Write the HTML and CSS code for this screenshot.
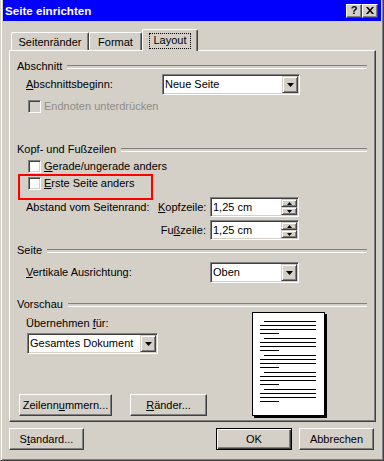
FILE: index.html
```html
<!DOCTYPE html>
<html lang="de">
<head>
  <meta charset="UTF-8" />
  <title>Seite einrichten</title>
  <link rel="stylesheet" href="styles.css">
</head>
<body>

  <div class="window">

    <!-- TITLE BAR -->
    <div class="titlebar">
      <span class="title">Seite einrichten</span>
      <span class="title-btn help">?</span>
      <span class="title-btn close">
        <svg width="8" height="7" viewBox="0 0 8 7"><path d="M0 0h2l2 2.5L6 0h2L5 3.5 8 7H6L4 4.5 2 7H0l3-3.5z"/></svg>
      </span>
    </div>

    <!-- TABS -->
    <div class="tabs">
      <div class="tab tab-margins">Seitenränder</div>
      <div class="tab tab-format">Format</div>
      <div class="tab tab-layout active"><span class="focus">Layout</span></div>
    </div>

    <div class="panel">

      <div class="group-title first">Abschnitt</div>
      <div class="row row-section">
        <span class="label-section"><u>A</u>bschnittsbeginn:</span>
        <div class="combo combo-section">
          <span class="combo-text">Neue Seite</span>
          <span class="combo-btn"><svg width="7" height="4" viewBox="0 0 7 4"><path d="M0 0h7L3.5 4z"/></svg></span>
        </div>
      </div>
      <div class="check-row disabled endnotes">
        <span class="check"></span>
        <span>Endnoten unterdrücken</span>
      </div>

      <div class="group-title header-group">Kopf- und Fußzeilen</div>
      <div class="check-row even-odd">
        <span class="check"></span>
        <span><u>G</u>erade/ungerade anders</span>
      </div>
      <div class="check-row first-page highlighted">
        <span class="check"></span>
        <span><u>E</u>rste Seite anders</span>
      </div>

      <div class="distance">
        <span>Abstand vom Seitenrand:</span>
        <span class="sub-label"><u>K</u>opfzeile:</span>
        <div class="spin">
          <span class="spin-text">1,25 cm</span>
          <span class="spin-btns">
            <span class="spin-btn"><svg width="5" height="3" viewBox="0 0 5 3"><path d="M2.5 0L5 3H0z"/></svg></span>
            <span class="spin-btn"><svg width="5" height="3" viewBox="0 0 5 3"><path d="M0 0h5L2.5 3z"/></svg></span>
          </span>
        </div>
        <span></span>
        <span class="sub-label">Fu<u>ß</u>zeile:</span>
        <div class="spin">
          <span class="spin-text">1,25 cm</span>
          <span class="spin-btns">
            <span class="spin-btn"><svg width="5" height="3" viewBox="0 0 5 3"><path d="M2.5 0L5 3H0z"/></svg></span>
            <span class="spin-btn"><svg width="5" height="3" viewBox="0 0 5 3"><path d="M0 0h5L2.5 3z"/></svg></span>
          </span>
        </div>
      </div>

      <div class="group-title page-group">Seite</div>
      <div class="row row-align">
        <span class="label-align"><u>V</u>ertikale Ausrichtung:</span>
        <div class="combo combo-align">
          <span class="combo-text">Oben</span>
          <span class="combo-btn"><svg width="7" height="4" viewBox="0 0 7 4"><path d="M0 0h7L3.5 4z"/></svg></span>
        </div>
      </div>

      <div class="group-title preview-group">Vorschau</div>
      <div class="preview-body">
        <div class="preview-left">
          <div class="apply-label">Übernehmen <u>f</u>ür:</div>
          <div class="combo combo-apply">
            <span class="combo-text">Gesamtes Dokument</span>
            <span class="combo-btn"><svg width="7" height="4" viewBox="0 0 7 4"><path d="M0 0h7L3.5 4z"/></svg></span>
          </div>
          <div class="panel-buttons">
            <div class="btn btn-lines">Zeilenn<u>u</u>mmern...</div>
            <div class="btn btn-borders"><u>R</u>änder...</div>
          </div>
        </div>
        <div class="page">
          <div class="para"><div class="line indent"></div><div class="line"></div><div class="line"></div><div class="line short"></div></div>
          <div class="para"><div class="line indent"></div><div class="line"></div><div class="line"></div><div class="line short"></div></div>
          <div class="para"><div class="line indent"></div><div class="line"></div><div class="line"></div><div class="line short"></div></div>
          <div class="para"><div class="line indent"></div><div class="line"></div><div class="line"></div><div class="line short"></div></div>
          <div class="para"><div class="line indent"></div><div class="line"></div><div class="line"></div><div class="line short"></div></div>
        </div>
      </div>

    </div>

    <!-- DIALOG BUTTONS -->
    <div class="dialog-buttons">
      <div class="btn btn-standard">S<u>t</u>andard...</div>
      <div class="btn btn-ok default">OK</div>
      <div class="btn btn-cancel">Abbrechen</div>
    </div>

  </div>

</body>
</html>
```

FILE: styles.css
```css
* {
  box-sizing: border-box;
  margin: 0;
  padding: 0;
}

body {
  background: #d4d0c8;
  font-family: "Liberation Sans", Arial, sans-serif;
  font-size: 11px;
  line-height: 13px;
  color: #000;
}

u {
  text-decoration: underline;
  text-underline-offset: 1px;
}

.window {
  width: 384px;
  height: 461px;
  padding: 0 2px;
  border: 1px solid;
  border-top: 0;
  border-color: #d4d0c8 #404040 #404040 #d4d0c8;
  box-shadow: inset 1px 0 #fff, inset -1px -1px #808080;
}

/* Title bar */
.titlebar {
  display: flex;
  align-items: center;
  height: 21px;
  padding: 0 3px 0 2px;
  background: #0000fc;
}

.title {
  flex: 1;
  color: #fff;
  font-weight: bold;
  font-size: 11.6px;
}

.title-btn {
  display: flex;
  justify-content: center;
  align-items: center;
  width: 16px;
  height: 14px;
  background: #d4d0c8;
  border: 1px solid;
  border-color: #fff #404040 #404040 #fff;
  box-shadow: inset -1px -1px #808080;
  font-weight: bold;
  font-size: 11px;
}

/* Tabs */
.tabs {
  display: flex;
  align-items: flex-end;
  height: 21px;
  margin-top: 8px;
  padding-left: 8px;
}

.tab {
  height: 18px;
  padding-top: 3px;
  text-align: center;
  border: 1px solid;
  border-bottom: 0;
  border-color: #fff #404040 #fff #fff;
  border-radius: 2px 2px 0 0;
  box-shadow: inset -1px 0 #808080;
}

.tab-margins { width: 78px; }
.tab-format { width: 53px; }

.tab-layout {
  position: relative;
  z-index: 1;
  width: 56px;
  height: 22px;
  margin-bottom: -1px;
  padding-top: 3px;
  background: #d4d0c8;
}

.focus {
  display: inline-block;
  padding: 0 3px 1px;
  border: 1px dotted #000;
}

/* Tab panel */
.panel {
  width: 367px;
  height: 372px;
  margin-left: 6px;
  border: 1px solid;
  border-color: #fff #404040 #404040 #fff;
  box-shadow: inset -1px -1px #808080;
}

.group-title {
  display: flex;
  height: 13px;
  margin: 0 8px 0 7px;
}

.group-title::after {
  content: "";
  flex: 1;
  height: 2px;
  margin: 5px 0 0 5px;
  border-top: 1px solid #808080;
  border-bottom: 1px solid #fff;
}

.group-title.first { margin-top: 9px; }
.group-title.header-group { margin-top: 30px; }
.group-title.page-group { margin-top: 4px; }
.group-title.preview-group { margin-top: 15px; }

.row {
  display: flex;
  align-items: center;
  margin-left: 16px;
}

.row-section { margin-top: 1px; }
.label-section { width: 136px; }
.row-align { margin-top: 5px; }
.label-align { width: 184px; }

/* Checkboxes */
.check-row {
  position: relative;
  display: flex;
  gap: 3px;
  margin-left: 18px;
  height: 13px;
}

.check {
  width: 13px;
  height: 13px;
  background: #fff;
  border: 1px solid;
  border-color: #808080 #fff #fff #808080;
  box-shadow: inset 1px 1px #404040, inset -1px -1px #d4d0c8;
}

.check-row.disabled { color: #8e8d89; }
.check-row.disabled .check { background: #d4d0c8; }

.endnotes { margin-top: 5px; }
.even-odd { margin-top: 4px; }
.first-page { margin-top: 4px; }

.highlighted::after {
  content: "";
  position: absolute;
  left: -10px;
  top: -3px;
  width: 131px;
  height: 22px;
  border: 2px solid #f00;
}

/* Spacing from page edge */
.distance {
  display: grid;
  grid-template-columns: 128px 48px 89px;
  column-gap: 4px;
  row-gap: 3px;
  align-items: center;
  margin: 7px 0 0 16px;
}

.sub-label { text-align: right; }

/* Combos and spin boxes */
.combo,
.spin {
  display: flex;
  padding: 1px;
  background: #fff;
  border: 1px solid;
  border-color: #808080 #fff #fff #808080;
  box-shadow: inset 1px 1px #404040, inset -1px -1px #d4d0c8;
}

.combo { height: 21px; }
.spin { height: 20px; }

.combo-text,
.spin-text {
  flex: 1;
  padding: 1px 0 0 1px;
  line-height: 14px;
}

.combo-section { width: 138px; }
.combo-align { width: 89px; }
.combo-apply { width: 131px; }

.combo-btn,
.spin-btn {
  display: flex;
  justify-content: center;
  align-items: center;
  width: 16px;
  background: #d4d0c8;
  border: 1px solid;
  border-color: #d4d0c8 #404040 #404040 #d4d0c8;
  box-shadow: inset 1px 1px #fff, inset -1px -1px #808080;
}

.spin-btns {
  display: flex;
  flex-direction: column;
}

.spin-btn { height: 8px; }

/* Preview */
.preview-body {
  display: flex;
}

.preview-left {
  width: 233px;
  margin-left: 9px;
}

.apply-label {
  margin: 6px 0 0 7px;
}

.combo-apply {
  margin: 3px 0 0 8px;
}

.panel-buttons {
  display: flex;
  gap: 18px;
  margin-top: 40px;
}

.page {
  width: 73px;
  height: 104px;
  margin-top: 1px;
  padding: 8px 8px 0 7px;
  overflow: hidden;
  background: #fff;
  border: 1px solid #000;
  box-shadow: 2px 2px 0 #000;
}

.para { margin-bottom: 4px; }

.line {
  height: 1px;
  margin-bottom: 3px;
  background: #000;
}

.line.indent { margin-left: 4px; }
.line.short { width: 19px; }

/* Buttons */
.btn {
  height: 22px;
  line-height: 20px;
  text-align: center;
  border: 1px solid;
  border-color: #fff #404040 #404040 #fff;
  box-shadow: inset -1px -1px #808080;
}

.btn-lines { width: 93px; }
.btn-borders { width: 77px; }

.btn.default {
  border-color: #000;
  box-shadow: inset 1px 1px #fff, inset -1px -1px #404040, inset -2px -2px #808080;
}

.dialog-buttons {
  display: flex;
  margin-top: 6px;
}

.btn-standard { width: 75px; margin-left: 6px; }
.btn-ok { width: 76px; margin-left: 132px; }
.btn-cancel { width: 75px; margin-left: 7px; }
```
